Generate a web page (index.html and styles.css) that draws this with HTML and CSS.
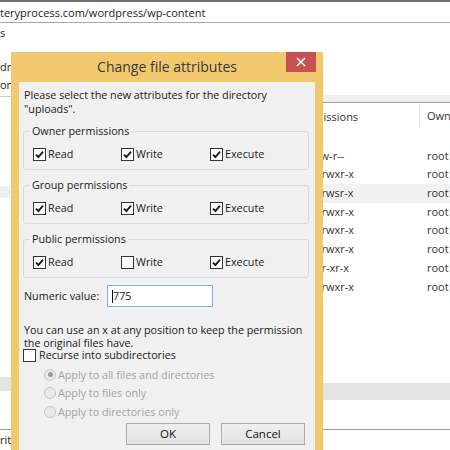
FILE: index.html
```html
<!DOCTYPE html>
<html>
<head>
<meta charset="utf-8">
<title>Change file attributes</title>
<link rel="stylesheet" href="styles.css">
</head>
<body>
<div class="app">
  <div class="address">teryprocess.com/wordpress/wp-content</div>
  <div class="status">s</div>
  <div class="panes">
    <div class="local">
      <div class="local-head">
        <div class="tline">dn</div>
        <div class="tline">on</div>
      </div>
      <div class="local-list">
        <div class="lrow sel"></div>
      </div>
      <div class="scroll local-scroll"></div>
    </div>
    <div class="remote">
      <div class="remote-top"></div>
      <div class="remote-head">
        <span class="c-name"></span>
        <span class="c-perm">Permissions</span>
        <span class="c-own">Owner/Group</span>
      </div>
      <div class="rows">
        <div class="row"><span class="c-name"></span><span class="c-perm"></span><span class="c-own"></span></div>
        <div class="row"><span class="c-name"></span><span class="c-perm">-rw-rw-r--</span><span class="c-own">root</span></div>
        <div class="row"><span class="c-name"></span><span class="c-perm">drwxrwxr-x</span><span class="c-own">root</span></div>
        <div class="row sel"><span class="c-name"></span><span class="c-perm">drwxrwsr-x</span><span class="c-own">root</span></div>
        <div class="row"><span class="c-name"></span><span class="c-perm">drwxrwxr-x</span><span class="c-own">root</span></div>
        <div class="row"><span class="c-name"></span><span class="c-perm">drwxrwxr-x</span><span class="c-own">root</span></div>
        <div class="row"><span class="c-name"></span><span class="c-perm">drwxrwxr-x</span><span class="c-own">root</span></div>
        <div class="row"><span class="c-name"></span><span class="c-perm">drwxr-xr-x</span><span class="c-own">root</span></div>
        <div class="row"><span class="c-name"></span><span class="c-perm">drwxrwxr-x</span><span class="c-own">root</span></div>
      </div>
      <div class="scroll remote-scroll"></div>
    </div>
  </div>
  <div class="queue">rit</div>
</div>

<div class="dialog">
  <div class="titlebar">
    <span class="title">Change file attributes</span>
    <div class="close">
      <svg width="10" height="10" viewBox="0 0 10 10"><path d="M1 1 L9 9 M9 1 L1 9" stroke="#ffffff" stroke-width="1.5" fill="none"/></svg>
    </div>
  </div>
  <div class="client">
    <p class="intro">Please select the new attributes for the directory<br>"uploads".</p>

    <fieldset class="group">
      <legend>Owner permissions</legend>
      <div class="checks">
        <label class="check"><span class="box on"><svg viewBox="0 0 11 11"><path d="M2 5.6 L4.4 8 L9 2.6"/></svg></span>Read</label>
        <label class="check"><span class="box on"><svg viewBox="0 0 11 11"><path d="M2 5.6 L4.4 8 L9 2.6"/></svg></span>Write</label>
        <label class="check"><span class="box on"><svg viewBox="0 0 11 11"><path d="M2 5.6 L4.4 8 L9 2.6"/></svg></span>Execute</label>
      </div>
    </fieldset>

    <fieldset class="group">
      <legend>Group permissions</legend>
      <div class="checks">
        <label class="check"><span class="box on"><svg viewBox="0 0 11 11"><path d="M2 5.6 L4.4 8 L9 2.6"/></svg></span>Read</label>
        <label class="check"><span class="box on"><svg viewBox="0 0 11 11"><path d="M2 5.6 L4.4 8 L9 2.6"/></svg></span>Write</label>
        <label class="check"><span class="box on"><svg viewBox="0 0 11 11"><path d="M2 5.6 L4.4 8 L9 2.6"/></svg></span>Execute</label>
      </div>
    </fieldset>

    <fieldset class="group">
      <legend>Public permissions</legend>
      <div class="checks">
        <label class="check"><span class="box on"><svg viewBox="0 0 11 11"><path d="M2 5.6 L4.4 8 L9 2.6"/></svg></span>Read</label>
        <label class="check"><span class="box"></span>Write</label>
        <label class="check"><span class="box on"><svg viewBox="0 0 11 11"><path d="M2 5.6 L4.4 8 L9 2.6"/></svg></span>Execute</label>
      </div>
    </fieldset>

    <div class="numeric">
      <span class="num-label">Numeric value:</span>
      <div class="textbox"><span class="caret"></span>775</div>
    </div>

    <p class="hint">You can use an x at any position to keep the permission<br>the original files have.</p>

    <label class="check recurse"><span class="box"></span>Recurse into subdirectories</label>

    <div class="radios">
      <label class="radio"><span class="dot on"></span>Apply to all files and directories</label>
      <label class="radio"><span class="dot"></span>Apply to files only</label>
      <label class="radio"><span class="dot"></span>Apply to directories only</label>
    </div>

    <div class="buttons">
      <div class="btn">OK</div>
      <div class="btn">Cancel</div>
    </div>
  </div>
</div>
</body>
</html>
```

FILE: styles.css
```css
html, body {
  margin: 0;
  padding: 0;
}
body {
  width: 450px;
  height: 450px;
  overflow: hidden;
  position: relative;
  background: #ffffff;
  font-family: "Open Sans", "Noto Sans", sans-serif;
  font-size: 10.75px;
  color: #1a1a1a;
}

/* ---------- background application ---------- */
.app {
  width: 450px;
  height: 450px;
  display: flex;
  flex-direction: column;
}
.address {
  border-top: 2px solid #6e6e6e;
  border-bottom: 1px solid #a8a8a8;
  height: 20px;
  line-height: 22px;
  font-size: 11px;
  color: #222;
  white-space: nowrap;
}
.status {
  height: 20px;
  line-height: 20px;
  font-size: 11px;
  color: #222;
}
.panes {
  display: flex;
  height: 365px;
}
.local {
  flex: none;
  width: 150px;
  display: flex;
  flex-direction: column;
}
.local-head {
  padding-top: 15px;
  padding-bottom: 2px;
  border-bottom: 1px solid #c8c8c8;
}
.tline {
  height: 18px;
  line-height: 18px;
  font-size: 11px;
  color: #222;
}
.local-list {
  flex: 1;
  padding-top: 89px;
}
.lrow.sel {
  height: 12px;
  background: #efefef;
}
.scroll {
  background: #e4e4e4;
}
.local-scroll {
  height: 14px;
  margin-bottom: 10px;
}
.remote {
  flex: 1;
  min-width: 0;
  overflow: hidden;
  display: flex;
  flex-direction: column;
}
.remote-top {
  height: 52px;
  border-bottom: 7px solid #eeeeee;
}
.remote-head {
  border-top: 1px solid #9c9c9c;
  height: 23px;
  display: grid;
  grid-template-columns: 146px 124px 200px;
  align-items: center;
  font-size: 11px;
  color: #333;
}
.remote-head .c-perm {
  height: 23px;
  line-height: 25px;
  border-right: 1px solid #e6e6e6;
}
.remote-head .c-own {
  line-height: 25px;
}
.c-own {
  padding-left: 7px;
  white-space: nowrap;
}
.rows {
  flex: 1;
  padding-top: 2px;
}
.row {
  height: 18.7px;
  line-height: 18.7px;
  display: grid;
  grid-template-columns: 146px 124px 200px;
  font-size: 11px;
  color: #333;
}
.row.sel {
  background: #f1f1f1;
}
.remote-scroll {
  height: 17px;
  margin-bottom: 1px;
}
.queue {
  margin-top: 28px;
  border-top: 1px solid #9c9c9c;
  height: 20px;
  line-height: 20px;
  font-size: 11px;
  color: #222;
}

/* ---------- dialog ---------- */
.dialog {
  position: absolute;
  left: 11px;
  top: 52px;
  width: 312px;
  height: 420px;
  box-sizing: border-box;
  padding: 0 8px;
  background: #f1c86d;
}
.titlebar {
  height: 30px;
  position: relative;
  display: flex;
  align-items: center;
  justify-content: center;
}
.title {
  font-size: 14px;
  color: #3a3a3a;
  line-height: 20px;
}
.close {
  position: absolute;
  top: 0;
  right: -1px;
  width: 30px;
  height: 20px;
  background: #c75050;
  display: flex;
  align-items: center;
  justify-content: center;
}
.close svg {
  display: block;
}
.client {
  background: #f0f0f0;
  height: 390px;
  padding: 6px 6px 0 4px;
  box-sizing: border-box;
}
.intro {
  margin: 0 0 0 1px;
  line-height: 14px;
}
.group {
  margin: 7px 0 0 0;
  padding: 7px 8px 7px 9px;
  border: 1px solid #dadada;
  border-radius: 3px;
  min-width: 0;
}
.group legend {
  padding: 0 2px;
  margin-left: -3px;
  line-height: 16px;
}
.checks {
  display: grid;
  grid-template-columns: 88px 89px auto;
  height: 16px;
  align-items: center;
}
.check {
  display: flex;
  align-items: center;
  gap: 2px;
}
.box {
  width: 13px;
  height: 13px;
  box-sizing: border-box;
  border: 1px solid #333333;
  background: #ffffff;
  display: block;
}
.box svg {
  display: block;
  width: 11px;
  height: 11px;
  fill: none;
  stroke: #1a1a1a;
  stroke-width: 1.9;
}
.numeric {
  margin-top: 7px;
  display: flex;
  align-items: center;
  height: 22px;
}
.num-label {
  margin-left: 1px;
  width: 83px;
}
.textbox {
  width: 106px;
  height: 22px;
  box-sizing: border-box;
  border: 1px solid #84b7e8;
  background: #ffffff;
  display: flex;
  align-items: center;
  padding-left: 4px;
}
.caret {
  width: 1px;
  height: 13px;
  background: #000;
}
.hint {
  margin: 16.5px 0 0 1px;
  line-height: 13px;
}
.recurse {
  height: 13px;
  gap: 3px;
  margin-top: -1px;
}
.radios {
  margin-top: 4px;
  padding-left: 21px;
}
.radio {
  display: flex;
  align-items: center;
  height: 18.5px;
  gap: 2px;
  color: #a3a3a3;
}
.dot {
  width: 12px;
  height: 12px;
  box-sizing: border-box;
  border-radius: 50%;
  border: 1px solid #c6c6c6;
  background: #e9e9e9;
  display: flex;
  align-items: center;
  justify-content: center;
}
.dot.on::after {
  content: "";
  width: 5px;
  height: 5px;
  border-radius: 50%;
  background: #9a9a9a;
}
.buttons {
  margin-top: 2px;
  margin-right: 4px;
  display: flex;
  justify-content: flex-end;
  gap: 11px;
}
.btn {
  width: 84px;
  height: 22px;
  box-sizing: border-box;
  border: 1px solid #acacac;
  background: linear-gradient(#efefef, #e3e3e3);
  text-align: center;
  line-height: 20px;
  font-size: 11.5px;
  color: #111;
}
```
